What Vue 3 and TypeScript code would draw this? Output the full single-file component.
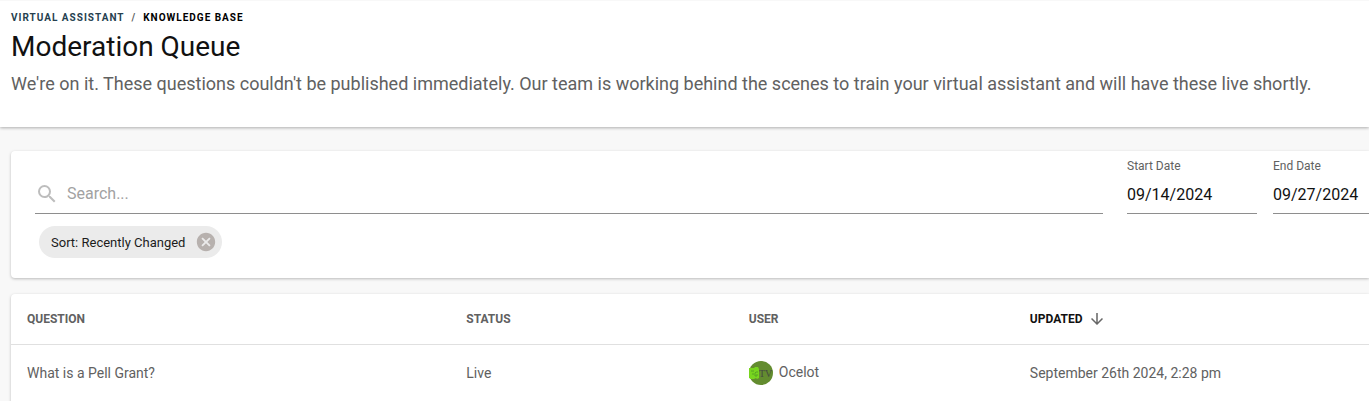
<script setup lang="ts">
import { ref } from 'vue'

interface QueueItem {
  question: string
  status: string
  user: string
  updated: string
}

const search = ref('')
const startDate = ref('09/14/2024')
const endDate = ref('09/27/2024')
const sorted = ref(true)

const items: QueueItem[] = [
  {
    question: 'What is a Pell Grant?',
    status: 'Live',
    user: 'Ocelot',
    updated: 'September 26th 2024, 2:28 pm',
  },
]
</script>

<template>
  <div class="page">
    <header class="page-header">
      <nav class="breadcrumb" aria-label="Breadcrumb">
        <a href="#assistant">Virtual Assistant</a>
        <span class="slash">/</span>
        <a href="#knowledge" class="current">Knowledge Base</a>
      </nav>
      <h1>Moderation Queue</h1>
      <p class="intro">
        We're on it. These questions couldn't be published immediately. Our team is working behind
        the scenes to train your virtual assistant and will have these live shortly.
      </p>
    </header>

    <main class="content">
      <section class="card filters">
        <div class="fields">
          <div class="search">
            <svg class="search-icon" viewBox="0 0 24 24" aria-hidden="true">
              <path
                d="M15.5 14h-.79l-.28-.27A6.47 6.47 0 0 0 16 9.5 6.5 6.5 0 1 0 9.5 16c1.61 0 3.09-.59 4.23-1.57l.27.28v.79l5 4.99L20.49 19l-4.99-5zm-6 0C7.01 14 5 11.99 5 9.5S7.01 5 9.5 5 14 7.01 14 9.5 11.99 14 9.5 14z"
              />
            </svg>
            <input v-model="search" type="text" placeholder="Search..." aria-label="Search" />
          </div>
          <div class="date">
            <label for="start-date">Start Date</label>
            <input id="start-date" v-model="startDate" type="text" />
          </div>
          <div class="date date-end">
            <label for="end-date">End Date</label>
            <input id="end-date" v-model="endDate" type="text" />
          </div>
        </div>
        <div class="chips">
          <div v-if="sorted" class="chip">
            <span>Sort: Recently Changed</span>
            <button type="button" aria-label="Remove sort" @click="sorted = false">
              <svg viewBox="0 0 24 24" aria-hidden="true">
                <path
                  d="M12 2C6.47 2 2 6.47 2 12s4.47 10 10 10 10-4.47 10-10S17.53 2 12 2zm5 13.59L15.59 17 12 13.41 8.41 17 7 15.59 10.59 12 7 8.41 8.41 7 12 10.59 15.59 7 17 8.41 13.41 12 17 15.59z"
                />
              </svg>
            </button>
          </div>
        </div>
      </section>

      <section class="card queue">
        <table>
          <thead>
            <tr>
              <th class="col-question" scope="col">QUESTION</th>
              <th class="col-status" scope="col">STATUS</th>
              <th class="col-user" scope="col">USER</th>
              <th scope="col" aria-sort="descending">
                <button type="button" class="sort">
                  UPDATED
                  <svg viewBox="0 0 24 24" aria-hidden="true">
                    <path d="M20 12l-1.41-1.41L13 16.17V4h-2v12.17l-5.58-5.59L4 12l8 8 8-8z" />
                  </svg>
                </button>
              </th>
            </tr>
          </thead>
          <tbody>
            <tr v-for="item in items" :key="item.question">
              <td>{{ item.question }}</td>
              <td>{{ item.status }}</td>
              <td>
                <div class="user">
                  <svg class="avatar" viewBox="0 0 24 24" aria-hidden="true">
                    <circle cx="12" cy="12" r="12" fill="#638c2f" />
                    <path d="M0 7h5l1-1h3l1 2v9l-2 1-1-1-2 1H2l-2-1z" fill="#78d51e" />
                    <path
                      d="M2 10h3M3 13h2M6 12l1-1h2M6 12v3h2v-2"
                      fill="none"
                      stroke="#57a423"
                    />
                    <text x="10" y="16" class="avatar-text">TV</text>
                  </svg>
                  <span>{{ item.user }}</span>
                </div>
              </td>
              <td>{{ item.updated }}</td>
            </tr>
          </tbody>
        </table>
      </section>
    </main>
  </div>
</template>

<style>
body {
  margin: 0;
  background: #f8f8f8;
  overflow: hidden;
}
</style>

<style scoped>
.page {
  font-family: Roboto, 'Liberation Sans', sans-serif;
  color: #616161;
}

.page * {
  box-sizing: border-box;
}

.page-header {
  padding: 12px 11px 31px;
  border-top: 1px solid #f8f8f8;
  background: #fff;
  box-shadow: 0 1px 3px rgba(0, 0, 0, 0.3);
}

.breadcrumb {
  display: flex;
  gap: 7px;
  font-size: 10px;
  line-height: 10px;
  font-weight: 700;
  letter-spacing: 1px;
  text-transform: uppercase;
}

.breadcrumb a {
  color: #263f4f;
  text-decoration: none;
}

.breadcrumb .current {
  color: #000;
}

h1 {
  margin: 8px 0 0;
  color: #111;
  font-size: 28px;
  line-height: 32px;
  font-weight: 400;
}

.intro {
  margin: 9px 0 0;
  font-size: 18px;
  line-height: 24px;
}

.content {
  display: flex;
  flex-direction: column;
  gap: 16px;
  padding: 24px 0 0 11px;
}

.card {
  border-radius: 4px 0 0 4px;
  background: #fff;
  box-shadow: 0 1px 3px rgba(0, 0, 0, 0.25);
}

.filters {
  padding: 8px 0 20px 24px;
}

.queue {
  padding-bottom: 16px;
}

.fields {
  display: flex;
  align-items: flex-end;
}

.search {
  display: flex;
  flex: 1;
  align-items: center;
  gap: 8px;
  height: 40px;
  margin-right: 24px;
  border-bottom: 1px solid #8e8e8e;
}

.search-icon {
  flex: none;
  width: 24px;
  height: 24px;
  fill: #bdbdbd;
}

input {
  width: 100%;
  padding: 0;
  border: 0;
  outline: 0;
  background: transparent;
  color: #111;
  font: inherit;
  font-size: 16px;
}

.search input::placeholder {
  color: #a2a2a2;
  opacity: 1;
}

.date {
  width: 130px;
  margin-right: 16px;
}

.date-end {
  width: 96px;
  margin-right: 0;
}

.date label {
  display: block;
  font-size: 12px;
  line-height: 14px;
}

.date input {
  display: block;
  height: 41px;
  padding-top: 2px;
  border-bottom: 1px solid #8e8e8e;
}

.chips {
  display: flex;
  min-height: 44px;
  padding: 12px 4px 0;
}

.chip {
  display: flex;
  align-items: center;
  gap: 10px;
  height: 32px;
  padding: 0 5px 0 12px;
  border-radius: 16px;
  background: #ebebeb;
  color: #1c1c1c;
  font-size: 13px;
}

button {
  padding: 0;
  border: 0;
  background: transparent;
  font: inherit;
  cursor: pointer;
}

.chip button,
.chip svg {
  display: block;
  width: 22px;
  height: 22px;
}

.chip svg {
  fill: #b7b1ae;
}

table {
  width: 100%;
  border-spacing: 0;
  table-layout: fixed;
}

th,
td {
  padding: 0 16px;
  text-align: left;
}

th {
  height: 51px;
  border-bottom: 1px solid #e0e0e0;
  font-size: 12px;
  font-weight: 700;
}

td {
  height: 56px;
  font-size: 14px;
}

.col-question {
  width: 32.35%;
}

.col-status {
  width: 20.8%;
}

.col-user {
  width: 20.7%;
}

.sort {
  display: flex;
  align-items: center;
  gap: 5px;
  color: #111;
}

.sort svg {
  width: 18px;
  height: 18px;
  fill: #666;
}

.user {
  display: flex;
  gap: 6px;
  line-height: 22px;
}

.avatar {
  width: 24px;
  height: 24px;
}

.avatar-text {
  fill: #454b40;
  font-family: 'Liberation Serif', serif;
  font-size: 10px;
}
</style>
